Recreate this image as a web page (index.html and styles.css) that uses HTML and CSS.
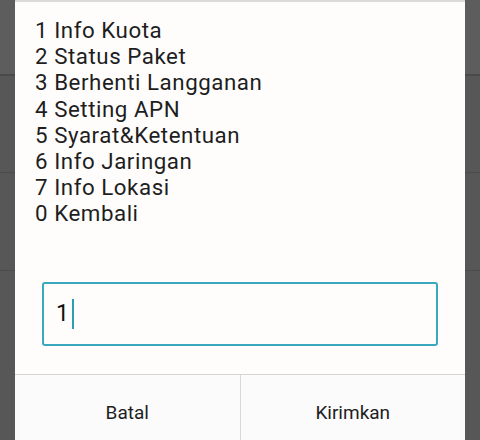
FILE: index.html
```html
<!DOCTYPE html>
<html>
<head>
<meta charset="utf-8">
<link rel="stylesheet" href="styles.css">
</head>
<body>
<div class="dialog">
  <div class="menu">
    <div>1 Info Kuota</div>
    <div>2 Status Paket</div>
    <div>3 Berhenti Langganan</div>
    <div>4 Setting APN</div>
    <div>5 Syarat&amp;Ketentuan</div>
    <div>6 Info Jaringan</div>
    <div>7 Info Lokasi</div>
    <div>0 Kembali</div>
  </div>
  <div class="field"><span class="value">1</span><span class="caret"></span></div>
  <div class="actions">
    <div class="btn">Batal</div>
    <div class="btn">Kirimkan</div>
  </div>
</div>
</body>
</html>
```

FILE: styles.css
```css
html, body {
  margin: 0;
  height: 440px;
  overflow: hidden;
}
body {
  background-color: #575757;
  background-image:
    linear-gradient(to bottom, transparent 74px, #4a4a4a 74px, #4a4a4a 76px, transparent 76px),
    linear-gradient(to bottom, transparent 172px, #4c4c4c 172px, #4c4c4c 173px, transparent 173px),
    linear-gradient(to bottom, transparent 270px, #4c4c4c 270px, #4c4c4c 271px, transparent 271px),
    linear-gradient(to bottom, #5d5d5d 0, #5d5d5d 74px, transparent 74px);
  font-family: Roboto, "Noto Sans", sans-serif;
}
.dialog {
  margin: 0 15px;
  width: 450px;
  height: 440px;
  background: #fefdfc;
  border-top: 2px solid #d9d9d9;
  box-sizing: border-box;
  display: flex;
  flex-direction: column;
}
.menu {
  padding: 15px 0 0 20px;
  font-size: 22.3px;
  line-height: 26.2px;
  letter-spacing: 0.55px;
  color: #1e1e1e;
}
.field {
  margin: 55px 0 0 27px;
  width: 396px;
  height: 64px;
  flex-shrink: 0;
  box-sizing: border-box;
  border: 2px solid #3aa9bd;
  border-radius: 3px;
  display: flex;
  align-items: center;
  padding-left: 12px;
  font-size: 23px;
  color: #111;
}
.caret {
  width: 2px;
  height: 30px;
  background: #2a9fb3;
  margin-left: 3px;
}
.actions {
  margin-top: 28px;
  border-top: 1px solid #d4d4d4;
  display: flex;
  flex: 1;
  background: #fcfbfb;
}
.btn {
  flex: 1;
  text-align: center;
  font-size: 19px;
  color: #1e1e1e;
  padding-top: 26px;
}
.btn + .btn {
  border-left: 1px solid #d9d9d9;
}
```
